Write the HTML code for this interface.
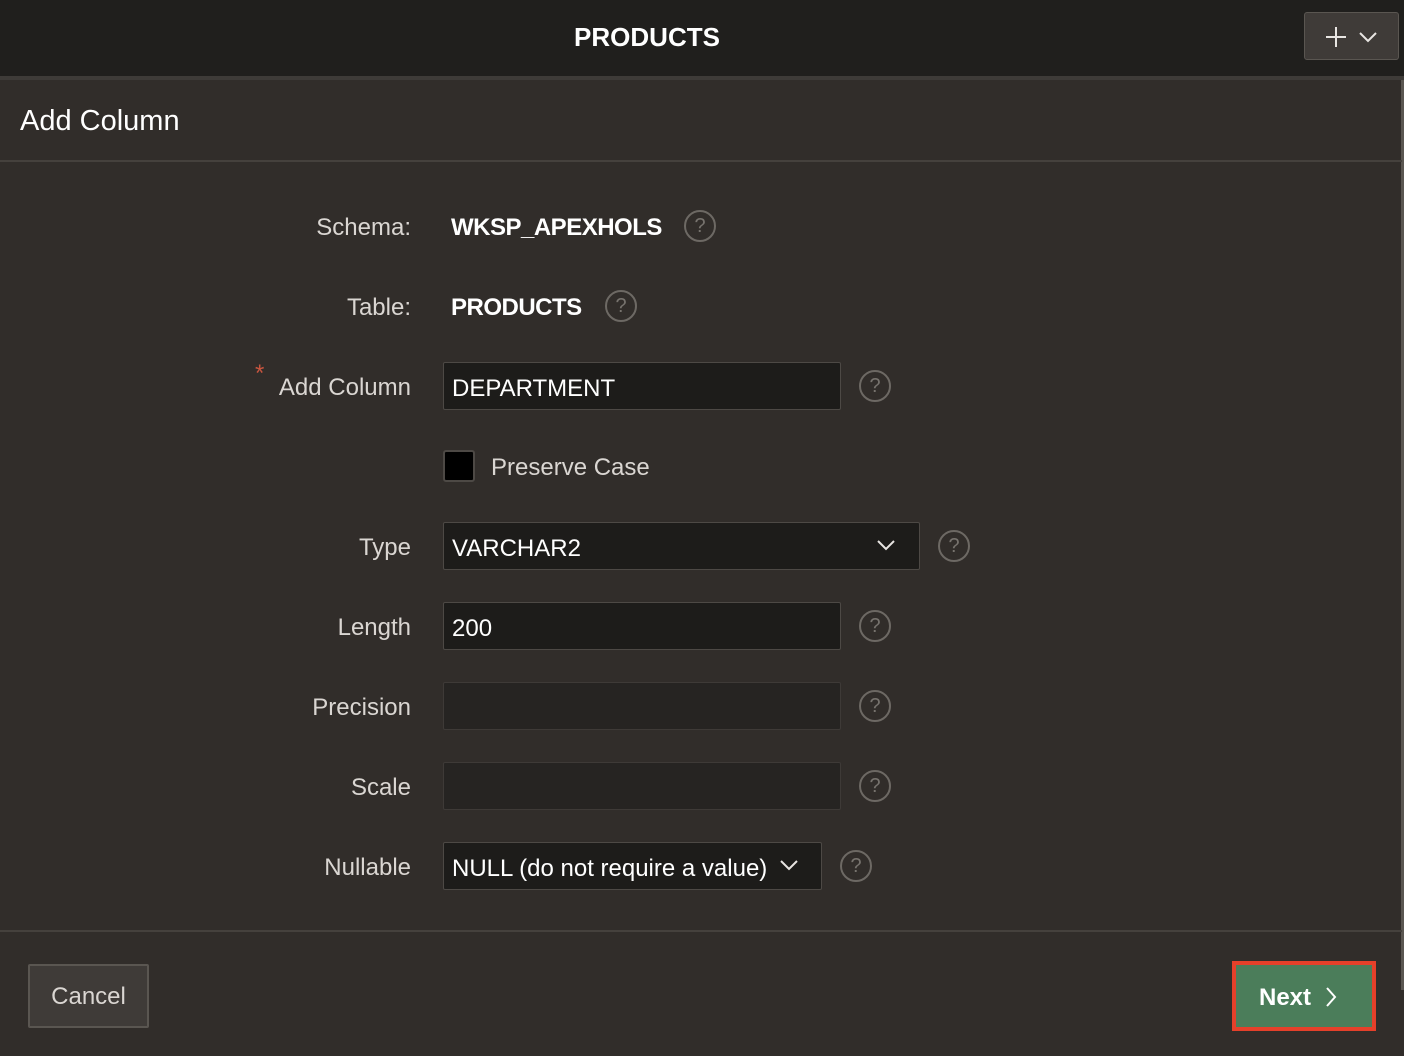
<!DOCTYPE html>
<html><head><meta charset="utf-8"><style>
*{box-sizing:border-box;margin:0;padding:0}
body{width:1404px;height:1056px;background:#312d2a;font-family:"Liberation Sans",sans-serif;position:relative;overflow:hidden;color:#e8e5e2}
.a{position:absolute}
.hdr{left:0;top:0;width:1404px;height:80px;background:#201f1d;border-bottom:4px solid #3e3b38}
.lbl{right:993px;font-size:24px;color:#dad6d2;text-align:right;white-space:nowrap}
.in{background:#1d1c1a;border:1px solid #4d4945;border-radius:2px;height:48px;left:443px;font-size:24px;color:#fff;padding:12px 8px 0;white-space:nowrap}
.q{width:32px;height:32px;border:2px solid #6d6964;border-radius:50%;color:#77736e;font-size:20px;text-align:center;line-height:28px}
.val{left:451px;font-size:24px;font-weight:bold;color:#fff;letter-spacing:-0.5px}
</style></head><body>
<div class="a hdr"></div>
<div class="a" style="left:0;width:1294px;top:22px;text-align:center;font-size:26px;font-weight:bold;color:#fff">PRODUCTS</div>
<div class="a" style="left:1304px;top:12px;width:95px;height:48px;background:#3f3b38;border:1px solid #5a5651;border-radius:3px">
<svg width="95" height="48" style="position:absolute;left:0;top:0"><path d="M21 24h20M31 14v20" stroke="#e8e5e2" stroke-width="2"/><path d="M55 20l8 8 8-8" stroke="#e8e5e2" stroke-width="2" fill="none"/></svg></div>
<div class="a" style="left:1401px;top:80px;width:3px;height:910px;background:#5a5651"></div>
<div class="a" style="left:20px;top:105px;font-size:29px;color:#fff">Add Column</div>
<div class="a" style="left:0;top:160px;width:1402px;height:2px;background:#45413d"></div>

<div class="a lbl" style="top:214px">Schema:</div>
<div class="a val" style="top:214px">WKSP_APEXHOLS</div>
<div class="a q" style="left:684px;top:210px">?</div>
<div class="a lbl" style="top:294px">Table:</div>
<div class="a val" style="top:294px">PRODUCTS</div>
<div class="a q" style="left:605px;top:290px">?</div>

<div class="a" style="left:255px;top:360px;color:#c7553f;font-size:24px">*</div>
<div class="a lbl" style="top:374px">Add Column</div>
<div class="a in" style="top:362px;width:398px">DEPARTMENT</div>
<div class="a q" style="left:859px;top:370px">?</div>

<div class="a" style="left:443px;top:450px;width:32px;height:32px;background:#000;border:2px solid #4d4945;border-radius:3px"></div>
<div class="a" style="left:491px;top:454px;font-size:24px;color:#dad6d2">Preserve Case</div>

<div class="a lbl" style="top:534px">Type</div>
<div class="a in" style="top:522px;width:477px">VARCHAR2</div>
<svg class="a" style="left:876px;top:538px" width="20" height="14"><path d="M2 3l8 8 8-8" stroke="#e8e5e2" stroke-width="2" fill="none"/></svg>
<div class="a q" style="left:938px;top:530px">?</div>

<div class="a lbl" style="top:614px">Length</div>
<div class="a in" style="top:602px;width:398px">200</div>
<div class="a q" style="left:859px;top:610px">?</div>

<div class="a lbl" style="top:694px">Precision</div>
<div class="a in" style="top:682px;width:398px;background:#262422;border-color:#3e3a37"></div>
<div class="a q" style="left:859px;top:690px">?</div>

<div class="a lbl" style="top:774px">Scale</div>
<div class="a in" style="top:762px;width:398px;background:#262422;border-color:#3e3a37"></div>
<div class="a q" style="left:859px;top:770px">?</div>

<div class="a lbl" style="top:854px">Nullable</div>
<div class="a in" style="top:842px;width:379px">NULL (do not require a value)</div>
<svg class="a" style="left:779px;top:858px" width="20" height="14"><path d="M2 3l8 8 8-8" stroke="#e8e5e2" stroke-width="2" fill="none"/></svg>
<div class="a q" style="left:840px;top:850px">?</div>

<div class="a" style="left:0;top:930px;width:1402px;height:2px;background:#45413d"></div>
<div class="a" style="left:28px;top:964px;width:121px;height:64px;background:#3f3b38;border:2px solid #5a5651;border-radius:2px;font-size:24px;color:#dad6d2;text-align:center;line-height:62px">Cancel</div>
<div class="a" style="left:1232px;top:961px;width:144px;height:70px;border:4px solid #e5402a;background:#4b7d5a"></div>
<div class="a" style="left:1259px;top:984px;font-size:24px;font-weight:bold;color:#fff">Next</div>
<svg class="a" style="left:1324px;top:986px" width="14" height="22"><path d="M3 2l8 9-8 9" stroke="#fff" stroke-width="2" fill="none"/></svg>
</body></html>
